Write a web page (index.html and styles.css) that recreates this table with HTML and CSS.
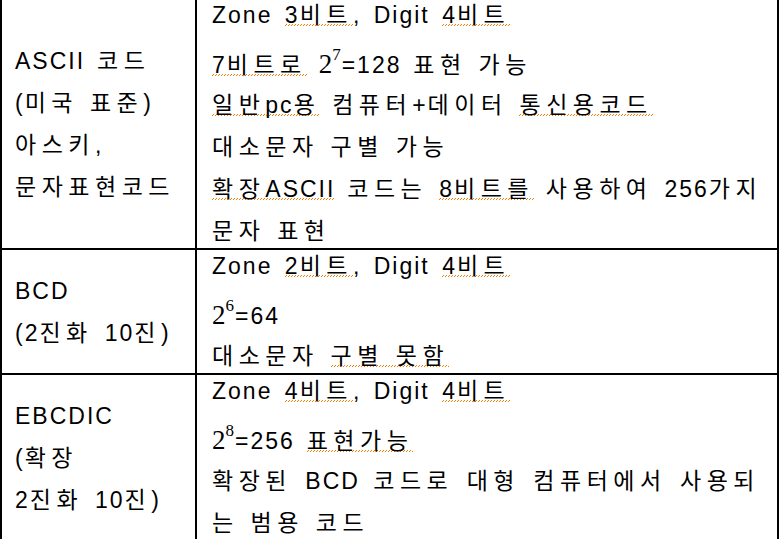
FILE: index.html
```html
<!DOCTYPE html>
<html lang="ko">
<head>
<meta charset="utf-8">
<title>코드 표</title>
<link rel="stylesheet" href="styles.css">
</head>
<body>
<div class="table">
  <div class="row row-first">
    <div class="cell name">
      <div class="ln"><span class="en">ASCII</span> 코드</div>
      <div class="ln"><span class="en">(</span>미국 표준<span class="en">)</span></div>
      <div class="ln">아스키<span class="en">,</span></div>
      <div class="ln">문자표현코드</div>
    </div>
    <div class="cell desc">
      <div class="ln"><span class="en">Zone </span><span class="sq"><span class="en">3</span>비트</span><span class="en">, Digit </span><span class="sq"><span class="en">4</span>비트</span></div>
      <div class="ln tall"><span class="sq"><span class="en">7</span>비트로</span> <span class="num">2</span><span class="sup">7</span><span class="en">=128</span> 표현 가능</div>
      <div class="ln"><span class="sq">일반<span class="en">pc</span>용</span> 컴퓨터<span class="en">+</span>데이터 <span class="sq">통신용코드</span></div>
      <div class="ln">대소문자 구별 가능</div>
      <div class="ln just"><span class="sq">확장<span class="en">ASCII</span></span> 코드는 <span class="sq"><span class="en">8</span>비트를</span> 사용하여 <span class="en">256</span>가지</div>
      <div class="ln">문자 표현</div>
    </div>
  </div>
  <div class="row">
    <div class="cell name">
      <div class="ln"><span class="en">BCD</span></div>
      <div class="ln"><span class="en">(2</span>진화 <span class="en">10</span>진<span class="en">)</span></div>
    </div>
    <div class="cell desc">
      <div class="ln"><span class="en">Zone </span><span class="sq"><span class="en">2</span>비트</span><span class="en">, Digit </span><span class="sq"><span class="en">4</span>비트</span></div>
      <div class="ln tall"><span class="num">2</span><span class="sup">6</span><span class="en">=64</span></div>
      <div class="ln">대소문자 <span class="sq">구별 못함</span></div>
    </div>
  </div>
  <div class="row">
    <div class="cell name">
      <div class="ln"><span class="en">EBCDIC</span></div>
      <div class="ln"><span class="en">(</span>확장</div>
      <div class="ln"><span class="en">2</span>진화 <span class="en">10</span>진<span class="en">)</span></div>
    </div>
    <div class="cell desc">
      <div class="ln"><span class="en">Zone </span><span class="sq"><span class="en">4</span>비트</span><span class="en">, Digit </span><span class="sq"><span class="en">4</span>비트</span></div>
      <div class="ln tall"><span class="num">2</span><span class="sup">8</span><span class="en">=256</span> <span class="sq">표현가능</span></div>
      <div class="ln just">확장된 <span class="en">BCD</span> 코드로 대형 컴퓨터에서 사용되</div>
      <div class="ln">는 범용 코드</div>
    </div>
  </div>
</div>
</body>
</html>
```
FILE: styles.css
```css
html, body {
  margin: 0;
  padding: 0;
  background: #fff;
}
body {
  font-family: "Liberation Sans", "Noto Sans CJK KR", sans-serif;
  font-size: 23px;
  color: #000;
  letter-spacing: 5.5px;
  word-spacing: 0;
}
.en {
  letter-spacing: 2px;
  word-spacing: 4px;
}
.table {
  width: 779px;
  box-sizing: border-box;
  border-left: 2px solid #000;
  border-right: 2px solid #000;
}
.row {
  display: grid;
  grid-template-columns: 195px 1fr;
  border-bottom: 2px solid #000;
}
.row-first {
  margin-top: -1px;
}
.cell {
  display: flex;
  flex-direction: column;
  gap: 12px;
  min-width: 0;
}
.name {
  border-right: 2px solid #000;
  justify-content: center;
  padding-left: 13px;
}
.desc {
  padding: 1px 17px 2px 15px;
}
.ln {
  height: 30px;
  line-height: 30px;
  white-space: nowrap;
}
.ln.tall {
  padding-top: 7px;
  margin-bottom: -1px;
}
.ln.just {
  text-align: justify;
  text-align-last: justify;
  text-justify: inter-word;
}
.num {
  font-family: "Liberation Serif", serif;
  font-size: 27px;
  letter-spacing: 0;
}
.sup {
  font-family: "Liberation Serif", serif;
  font-size: 17px;
  line-height: 0;
  vertical-align: 13px;
  letter-spacing: 0;
  margin-right: 1px;
}
.sq {
  background-image:
    linear-gradient(90deg, #f07c00 0 1px, transparent 1px),
    linear-gradient(90deg, transparent 0 1px, #f07c00 1px 2px, transparent 2px);
  background-size: 3px 1px, 3px 1px;
  background-repeat: repeat-x;
  background-position: 0 calc(100% - 2px), 0 calc(100% - 3px);
}
```
